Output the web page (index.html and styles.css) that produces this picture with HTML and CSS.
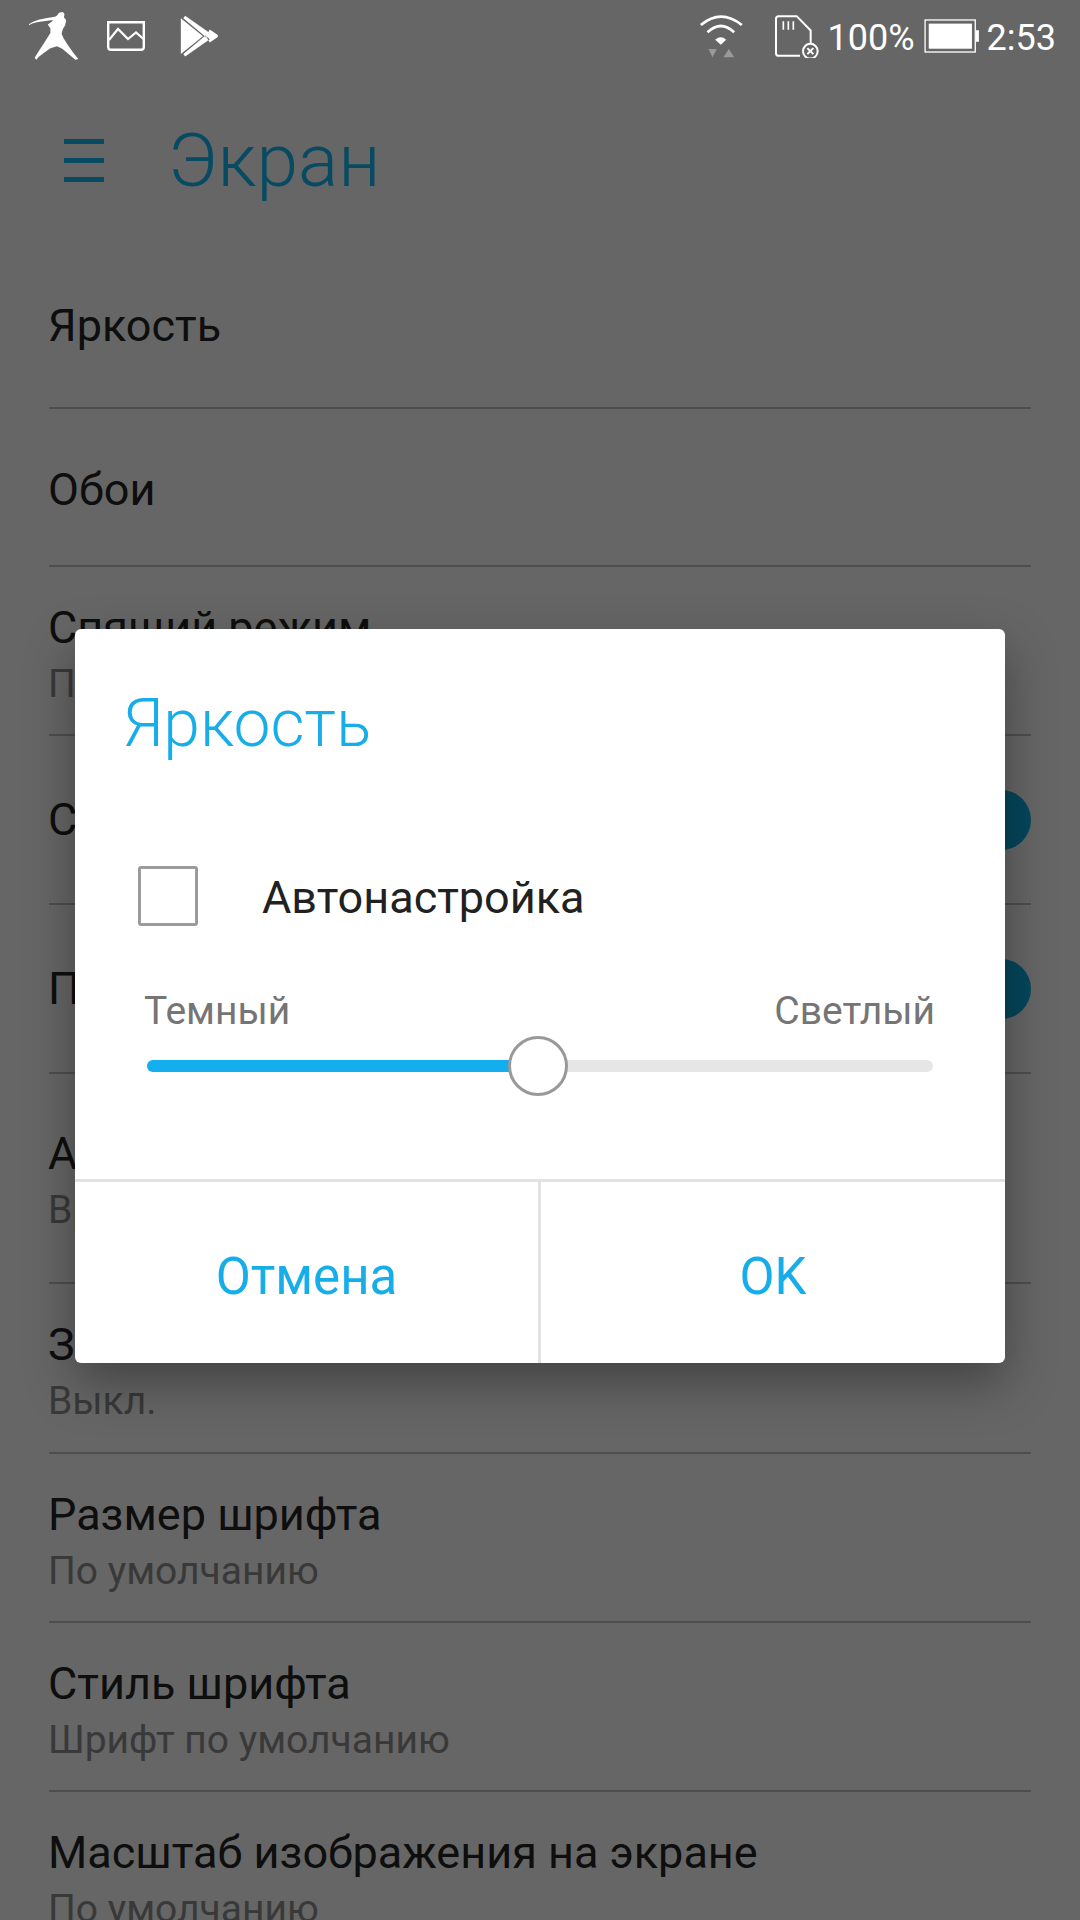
FILE: index.html
```html
<!DOCTYPE html>
<html lang="ru">

<head>
	<meta charset="utf-8">
	<title>Экран</title>
	<link rel="stylesheet" href="styles.css">
</head>

<body>
	<div class="phone">
		<div class="statusbar">
			<div class="status-left">
				<svg class="ic-ninja" viewBox="27 20 152 146"><path d="M27 57C45 44 70 40 97 36L108 34L113 30L118 22L130 20L135 27L133 36L140 44L137 60L130 72L126 86L132 100L145 120L160 142L177 163L168 165L150 150L128 132L112 124L92 130L72 145L55 158L50 165L44 160L52 146L68 122L82 100L92 84L92 70L84 58L96 50L100 44L72 48C55 50 40 52 27 60Z" fill="#fff"/></svg>
				<svg class="ic-image" viewBox="0 0 38 30"><path d="M1.200 1.200H36.800V26Q36.800 28.800 34 28.800H4Q1.200 28.800 1.200 26Z" fill="none" stroke="#fff" stroke-width="2.400"/><path d="M2 19L11 8L21 18L29 11.500L36.500 18" fill="none" stroke="#fff" stroke-width="2.200"/></svg>
				<svg class="ic-play" viewBox="530 40 130 135"><path d="M536 50L608 108L536 166Z M544 50L550 42L630 98L616 110Z M544 166L550 174L630 118L616 106Z M630 86L656 104V111L630 129L618 108Z" fill="#fff"/></svg>
			</div>
			<div class="status-right">
				<svg class="ic-wifi" viewBox="60 45 128 135">
					<path d="M62 78Q122 28 185 78M82 100Q122 62 162 100" fill="none" stroke="#fff" stroke-width="8"/>
					<path d="M105 122Q122 108 138 122L122 137Z" fill="#fff"/>
					<path d="M85 150H110L97 175ZM130 175H162L146 150Z" fill="#999"/>
				</svg>
				<svg class="ic-sd" viewBox="285 44 132 128">
					<path d="M360 166H296Q288 166 288 158V55Q288 47 296 47H350L392 90V128" fill="none" stroke="#fff" stroke-width="6"/>
					<path d="M310 62V88M325 62V88M340 62V88" stroke="#fff" stroke-width="5"/>
					<circle cx="391" cy="152" r="22" fill="none" stroke="#fff" stroke-width="6"/>
					<path d="M382 143L400 161M400 143L382 161" stroke="#fff" stroke-width="6"/>
				</svg>
				<span class="status-text batt-text">100%</span>
				<svg class="ic-batt" viewBox="730 56 166 103">
					<rect x="733" y="59" width="152" height="97" fill="none" stroke="#fff" stroke-width="4"/>
					<rect x="744" y="70" width="131" height="76" fill="#fff"/>
					<rect x="887" y="90" width="9" height="35" fill="#fff"/>
				</svg>
				<span class="status-text">2:53</span>
			</div>
		</div>

		<div class="appbar">
			<div class="menu-btn">
				<span></span>
				<span></span>
				<span></span>
			</div>
			<h1>Экран</h1>
		</div>

		<div class="list">
			<div class="row first"><div class="row-title">Яркость</div></div>
			<div class="row single"><div class="row-title">Обои</div></div>
			<div class="row">
				<div class="row-title">Спящий режим</div>
				<div class="row-sub">После 1 мин. бездействия</div>
			</div>
			<div class="row with-toggle">
				<div class="row-text"><div class="row-title">Светодиодный индикатор</div></div>
				<div class="toggle"></div>
			</div>
			<div class="row with-toggle">
				<div class="row-text"><div class="row-title">Пульсация индикатора</div></div>
				<div class="toggle"></div>
			</div>
			<div class="row tall">
				<div class="row-title">Автоповорот экрана</div>
				<div class="row-sub">Вращать изображение</div>
			</div>
			<div class="row after-tall">
				<div class="row-title">Заставка</div>
				<div class="row-sub">Выкл.</div>
			</div>
			<div class="row">
				<div class="row-title">Размер шрифта</div>
				<div class="row-sub">По умолчанию</div>
			</div>
			<div class="row">
				<div class="row-title">Стиль шрифта</div>
				<div class="row-sub">Шрифт по умолчанию</div>
			</div>
			<div class="row last">
				<div class="row-title">Масштаб изображения на экране</div>
				<div class="row-sub">По умолчанию</div>
			</div>
		</div>

		<div class="overlay">
			<div class="dialog">
				<h2>Яркость</h2>
				<div class="auto-row">
					<div class="checkbox"></div>
					<span class="auto-label">Автонастройка</span>
				</div>
				<div class="slider-labels">
					<span>Темный</span>
					<span>Светлый</span>
				</div>
				<div class="slider">
					<div class="slider-fill"></div>
					<div class="slider-thumb"></div>
				</div>
				<div class="dialog-buttons">
					<div class="dialog-btn">Отмена</div>
					<div class="dialog-btn">OK</div>
				</div>
			</div>
		</div>
	</div>
</body>

</html>
```

FILE: styles.css
```css
body {
	margin: 0;
	font-family: Roboto, "Noto Sans", sans-serif;
	background-color: #fff;
}

.phone {
	position: relative;
	width: 1080px;
	height: 1920px;
	overflow: hidden;
	background-color: #fff;
}

/* status bar sits above the dim layer */
.statusbar {
	position: relative;
	z-index: 3;
	display: flex;
	justify-content: space-between;
	align-items: center;
	height: 72px;
	padding: 0 24px 0 29px;
	color: #fff;
}

.status-left,
.status-right {
	display: flex;
	align-items: center;
}

.ic-ninja {
	width: 50px;
	height: 48px;
}

.ic-image {
	width: 38px;
	height: 30px;
	margin-left: 28px;
}

.ic-play {
	width: 40px;
	height: 42px;
	margin-left: 34px;
}

.ic-wifi {
	width: 43px;
	height: 45px;
	margin-right: 32px;
}

.ic-sd {
	width: 44px;
	height: 43px;
	margin-right: 9px;
}

.ic-batt {
	width: 55px;
	height: 34px;
	margin: 0 8px 0 9px;
}

.status-text {
	padding-top: 3px;
	font-size: 36px;
	line-height: 40px;
}

.appbar {
	display: flex;
	align-items: center;
	height: 174px;
	padding-left: 64px;
	color: #12b8f5;
	box-sizing: border-box;
	padding-top: 2px;
}

.menu-btn {
	display: flex;
	flex-direction: column;
	gap: 14px;
	width: 40px;
	margin-right: 64px;
}

.menu-btn span {
	height: 5px;
	background-color: #12b8f5;
}

h1 {
	margin: 0;
	font-size: 75px;
	font-weight: 300;
}

.list {
	margin: 0 49px;
}

.row {
	height: 169px;
	padding-top: 33px;
	box-sizing: border-box;
	border-bottom: 2px solid #c4c4c4;
}

.row.first {
	height: 163px;
	padding-top: 52px;
}

.row.single {
	height: 158px;
	padding-top: 53px;
}

.row.tall {
	height: 210px;
	padding-top: 52px;
}

.row.after-tall {
	height: 170px;
}

.row.last {
	border-bottom: none;
}

.row.with-toggle {
	display: flex;
	justify-content: space-between;
	align-items: center;
	padding-top: 0;
}

.row-title {
	font-size: 45px;
	line-height: 56px;
	margin-left: -1px;
	color: #232323;
}

.row-sub {
	font-size: 39px;
	line-height: 56px;
	margin-left: -1px;
	color: #909090;
}

.toggle {
	width: 60px;
	height: 60px;
	border-radius: 50%;
	background-color: #0db0e6;
}

.overlay {
	position: absolute;
	top: 0;
	left: 0;
	z-index: 2;
	display: flex;
	justify-content: center;
	align-items: flex-start;
	width: 100%;
	height: 100%;
	padding-top: 629px;
	box-sizing: border-box;
	background-color: rgba(0, 0, 0, 0.6);
}

.dialog {
	width: 930px;
	height: 734px;
	display: flex;
	flex-direction: column;
	background-color: #fff;
	border-radius: 6px;
	box-shadow: 0 20px 50px rgba(0, 0, 0, 0.35);
	overflow: hidden;
}

h2 {
	margin: 0;
	padding: 57px 0 0 48px;
	font-size: 66px;
	line-height: 76px;
	font-weight: 300;
	color: #16ade8;
}

.auto-row {
	display: flex;
	align-items: center;
	margin-top: 104px;
	padding-left: 63px;
	height: 60px;
	font-size: 45px;
	color: #212121;
}

.auto-label {
	padding-top: 3px;
}

.checkbox {
	width: 60px;
	height: 60px;
	margin-right: 64px;
	box-sizing: border-box;
	border: 3px solid #9b9b9b;
	border-radius: 3px;
}

.slider-labels {
	display: flex;
	justify-content: space-between;
	margin: 63px 70px 0 69px;
	font-size: 39px;
	line-height: 44px;
	color: #757575;
}

.slider {
	position: relative;
	height: 12px;
	margin: 27px 72px 0;
	border-radius: 6px;
	background-color: #e6e6e6;
}

.slider-fill {
	width: 370px;
	height: 12px;
	border-radius: 6px 0 0 6px;
	background-color: #12aeee;
}

.slider-thumb {
	position: absolute;
	top: -24px;
	left: 361px;
	width: 60px;
	height: 60px;
	box-sizing: border-box;
	border: 3px solid #999;
	border-radius: 50%;
	background-color: #fff;
}

.dialog-buttons {
	display: flex;
	margin-top: auto;
	height: 181px;
	border-top: 3px solid #e2e2e2;
}

.dialog-btn {
	display: flex;
	justify-content: center;
	align-items: center;
	flex: 1;
	box-sizing: border-box;
	padding-top: 7px;
	font-size: 51px;
	color: #16ade8;
}

.dialog-btn:first-child {
	flex: 0 0 466px;
	border-right: 3px solid #e2e2e2;
}
```
